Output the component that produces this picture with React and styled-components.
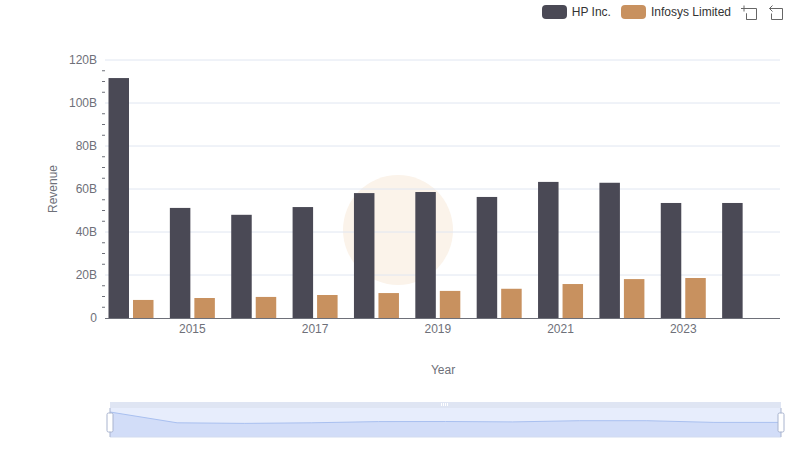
import React from "react";
import styled, { createGlobalStyle } from "styled-components";

const Global = createGlobalStyle`
  html, body { margin: 0; padding: 0; background: #fff; }
  body { font-family: "Liberation Sans", Arial, sans-serif; }
`;

const Page = styled.div`
  width: 800px; height: 461px; position: relative; overflow: hidden; background: #fff;
`;
const Legend = styled.div`
  display: flex; justify-content: flex-end; align-items: center; gap: 10px;
  height: 24px; padding: 0 16px 0 0; margin-top: 0;
`;
const LegendItem = styled.div`
  display: flex; align-items: center; gap: 5px; font-size: 12px; color: #333;
`;
const Swatch = styled.span`
  width: 25px; height: 14px; border-radius: 4px; background: ${p => p.c};
`;
const Tools = styled.div`display: flex; gap: 10px; align-items: center; margin-left: 0;`;
const Chart = styled.svg`display: block; position: absolute; left: 0; top: 0;`;

const years = [2014,2015,2016,2017,2018,2019,2020,2021,2022,2023,2024];
const hp = [111.6,51.2,48.0,51.6,58.1,58.6,56.3,63.3,62.9,53.5,53.5];
const inf = [8.4,9.3,9.8,10.7,11.6,12.6,13.6,15.8,18.1,18.6,null];
const X0 = 105, X1 = 780, Y0 = 318, K = 258 / 120;
const gw = (X1 - X0) / 11;

export default function App() {
  const zx0 = 110, zx1 = 781, zy0 = 412, zy1 = 432;
  const pts = hp.map((v, i) => [zx0 + (i / 10) * (zx1 - zx0), zy1 - (v / 111.6) * (zy1 - zy0)]);
  const line = pts.map((p, i) => (i ? "L" : "M") + p[0].toFixed(1) + " " + p[1].toFixed(1)).join(" ");
  return (
    <Page>
      <Global />
      <Chart width="800" height="461">
        <circle cx="398" cy="230" r="55" fill="#fbf3ea" />
        {[0,20,40,60,80,100,120].map(v => {
          const y = Y0 - v * K;
          return (
            <g key={v}>
              {v > 0 && <line x1={X0} x2={X1} y1={y} y2={y} stroke="#e0e6f1" />}
              <text x="97" y={y + 4} textAnchor="end" fontSize="12" fill="#6e7079">{v === 0 ? "0" : v + "B"}</text>
            </g>
          );
        })}
        {Array.from({ length: 24 }).map((_, i) => {
          const y = Y0 - (i * 5 + 5) * K;
          return i % 4 === 3 ? null : <line key={i} x1="102" x2="105" y1={y} y2={y} stroke="#6e7079" />;
        })}
        {years.map((yr, i) => {
          const s = X0 + i * gw;
          return (
            <g key={yr}>
              <rect x={s + 3.5} y={Y0 - hp[i] * K} width="20.5" height={hp[i] * K} fill="#4a4955" />
              {inf[i] != null && <rect x={s + 28} y={Y0 - inf[i] * K} width="20.5" height={inf[i] * K} fill="#c8915f" />}
              {yr % 2 === 1 && <text x={s + 26} y="333" textAnchor="middle" fontSize="12" fill="#6e7079">{yr}</text>}
            </g>
          );
        })}
        <line x1={X0} x2={X1} y1={Y0 + 0.5} y2={Y0 + 0.5} stroke="#6e7079" />
        <text x="443" y="374" textAnchor="middle" fontSize="12" fill="#6e7079">Year</text>
        <text transform="translate(57 189) rotate(-90)" textAnchor="middle" fontSize="12" fill="#6e7079">Revenue</text>

        <rect x={zx0} y="402" width={zx1 - zx0} height="6" fill="#dfe5f3" />
        <rect x={zx0} y="408" width={zx1 - zx0} height="29" fill="#e7edfc" />
        <path d={line + ` L${zx1} 437 L${zx0} 437 Z`} fill="#d2ddf8" />
        <path d={line} fill="none" stroke="#a9c0f0" />
        <line x1={zx0} x2={zx1} y1="437" y2="437" stroke="#d2dbf0" />
        <g fill="#fff">
          <rect x="441" y="403" width="1" height="3" /><rect x="443" y="403" width="1" height="3" /><rect x="445" y="403" width="1" height="3" /><rect x="447" y="403" width="1" height="3" />
        </g>
        {[zx0, zx1].map(x => (
          <g key={x}>
            <line x1={x} x2={x} y1="408" y2="437" stroke="#a9b4cf" />
            <rect x={x - 3} y="413" width="6" height="19" rx="1.5" fill="#fff" stroke="#a9b4cf" />
          </g>
        ))}
      </Chart>
      <Legend>
        <LegendItem><Swatch c="#4a4955" />HP Inc.</LegendItem>
        <LegendItem><Swatch c="#c8915f" />Infosys Limited</LegendItem>
        <Tools>
          <svg width="17" height="17" viewBox="0 0 17 17" fill="none" stroke="#666" strokeWidth="1">
            <path d="M0 4.5h6M3 1.5v6M5.5 4.5h10v11h-10v-6M5.5 9.5v6" />
          </svg>
          <svg width="16" height="17" viewBox="0 0 16 17" fill="none" stroke="#666" strokeWidth="1">
            <path d="M4.5 1.5l-3 3 3 3M1.5 4.5h13v11h-11v-6" />
          </svg>
        </Tools>
      </Legend>
    </Page>
  );
}
